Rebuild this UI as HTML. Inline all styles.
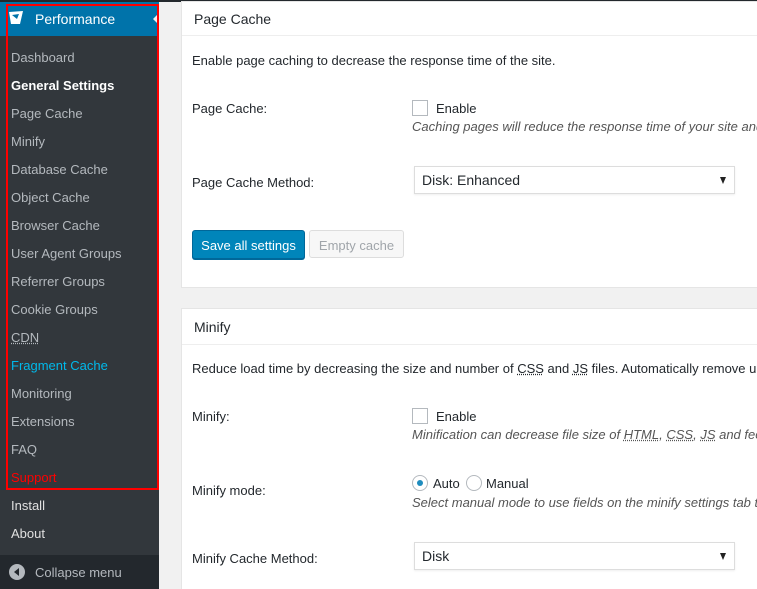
<!DOCTYPE html>
<html><head><meta charset="utf-8"><style>
*{margin:0;padding:0;box-sizing:border-box}
html,body{width:757px;height:589px;overflow:hidden}
body{background:#f1f1f1;font-family:"Liberation Sans",sans-serif;font-size:13px;color:#23282d;position:relative}
#top{position:absolute;left:0;top:0;width:757px;height:2px;background:#23282d}
#side{position:absolute;left:0;top:0;width:159px;height:589px;background:#32373c}
#perf{position:absolute;left:0;top:2px;width:159px;height:34px;background:#0073aa;color:#fff;font-size:14px}
#perf span{position:absolute;left:35px;top:9px}
#perf .arr{position:absolute;right:0;top:11px;width:0;height:0;border-top:6px solid transparent;border-bottom:6px solid transparent;border-right:6px solid #f1f1f1}
.it{position:absolute;left:11px;color:#b4b9be;font-size:13px;white-space:nowrap}
#redbox{position:absolute;left:6px;top:4px;width:153px;height:486px;border:2px solid #f00}
#coll{position:absolute;left:0;top:555px;width:159px;height:34px;background:#23282d;color:#b4b9be}
.card{position:absolute;left:181px;width:600px;background:#fff;border:1px solid #e5e5e5;overflow:hidden}
.card h3{font-size:14px;font-weight:normal;color:#23282d;height:34px;padding:9px 0 0 12px;border-bottom:1px solid #eee}
.t{position:absolute;white-space:nowrap}
.i{font-style:italic;color:#555}
.cb{position:absolute;width:16px;height:16px;border:1px solid #b4b9be;background:#fff}
.sel{position:absolute;left:232px;width:321px;height:28px;border:1px solid #ddd;box-shadow:0 1px 2px rgba(0,0,0,.07);padding:5px 0 0 7px;font-size:14px}
.sel:after{content:"";position:absolute;right:8px;top:10px;border-left:3.5px solid transparent;border-right:3.5px solid transparent;border-top:7px solid #222}
abbr{text-decoration:underline dotted}
.btn{position:absolute;top:228px;height:29px;border-radius:3px;white-space:nowrap;text-align:center;padding-top:7px}
</style></head><body>
<div id="side">
<div id="perf"><svg style="position:absolute;left:8px;top:8px" width="16" height="16" viewBox="0 0 16 16"><path d="M1 2 L15 1 L12 14 L3 14 Z" fill="#fff"/><path d="M4 5 L11 4 L9 9 Z" fill="#0073aa"/></svg><span>Performance</span><div class="arr"></div></div>
<div class="it" style="top:50px">Dashboard</div>
<div class="it" style="top:78px;color:#fff;font-weight:bold">General Settings</div>
<div class="it" style="top:106px">Page Cache</div>
<div class="it" style="top:134px">Minify</div>
<div class="it" style="top:162px">Database Cache</div>
<div class="it" style="top:190px">Object Cache</div>
<div class="it" style="top:218px">Browser Cache</div>
<div class="it" style="top:246px">User Agent Groups</div>
<div class="it" style="top:274px">Referrer Groups</div>
<div class="it" style="top:302px">Cookie Groups</div>
<div class="it" style="top:330px"><abbr>CDN</abbr></div>
<div class="it" style="top:358px;color:#00b9eb">Fragment Cache</div>
<div class="it" style="top:386px">Monitoring</div>
<div class="it" style="top:414px">Extensions</div>
<div class="it" style="top:442px">FAQ</div>
<div class="it" style="top:470px;color:#f00">Support</div>
<div class="it" style="top:498px;color:#e0e0e0">Install</div>
<div class="it" style="top:526px;color:#e0e0e0">About</div>
<div id="coll"><svg style="position:absolute;left:9px;top:9px" width="16" height="16" viewBox="0 0 16 16"><circle cx="8" cy="8" r="8" fill="#b4b9be"/><path d="M10 4 L5 8 L10 12 Z" fill="#23282d"/></svg><span style="position:absolute;left:35px;top:10px">Collapse menu</span></div>
</div>
<div id="redbox"></div>
<div id="top"></div>

<div class="card" style="top:1px;height:287px">
<h3>Page Cache</h3>
<div class="t" style="left:10px;top:51px">Enable page caching to decrease the response time of the site.</div>
<div class="t" style="left:10px;top:99px">Page Cache:</div>
<div class="cb" style="left:230px;top:98px"></div>
<div class="t" style="left:254px;top:99px">Enable</div>
<div class="t i" style="left:230px;top:117px">Caching pages will reduce the response time of your site and increase</div>
<div class="t" style="left:10px;top:173px">Page Cache Method:</div>
<div class="sel" style="top:164px">Disk: Enhanced</div>
<div class="btn" style="left:10px;width:113px;background:#0085ba;border:1px solid #006799;color:#fff;box-shadow:0 1px 0 #006799">Save all settings</div>
<div class="btn" style="left:127px;width:95px;height:28px;background:#f7f7f7;border:1px solid #ddd;color:#a0a5aa">Empty cache</div>
</div>

<div class="card" style="top:308px;height:281px;border-bottom:none">
<h3 style="height:36px;padding-top:10px">Minify</h3>
<div class="t" style="left:10px;top:52px">Reduce load time by decreasing the size and number of <abbr>CSS</abbr> and <abbr>JS</abbr> files. Automatically remove unnecessary</div>
<div class="t" style="left:10px;top:100px">Minify:</div>
<div class="cb" style="left:230px;top:99px"></div>
<div class="t" style="left:254px;top:100px">Enable</div>
<div class="t i" style="left:230px;top:118px">Minification can decrease file size of <abbr>HTML</abbr>, <abbr>CSS</abbr>, <abbr>JS</abbr> and feeds respectively</div>
<div class="t" style="left:10px;top:174px">Minify mode:</div>
<div style="position:absolute;left:230px;top:166px;width:16px;height:16px;border:1px solid #b4b9be;border-radius:50%"><div style="position:absolute;left:4px;top:4px;width:6px;height:6px;border-radius:50%;background:#1e8cbe"></div></div>
<div class="t" style="left:251px;top:167px">Auto</div>
<div style="position:absolute;left:284px;top:166px;width:16px;height:16px;border:1px solid #b4b9be;border-radius:50%"></div>
<div class="t" style="left:304px;top:167px">Manual</div>
<div class="t i" style="left:230px;top:186px">Select manual mode to use fields on the minify settings tab to specify</div>
<div class="t" style="left:10px;top:242px">Minify Cache Method:</div>
<div class="sel" style="top:233px">Disk</div>
</div>
</body></html>
